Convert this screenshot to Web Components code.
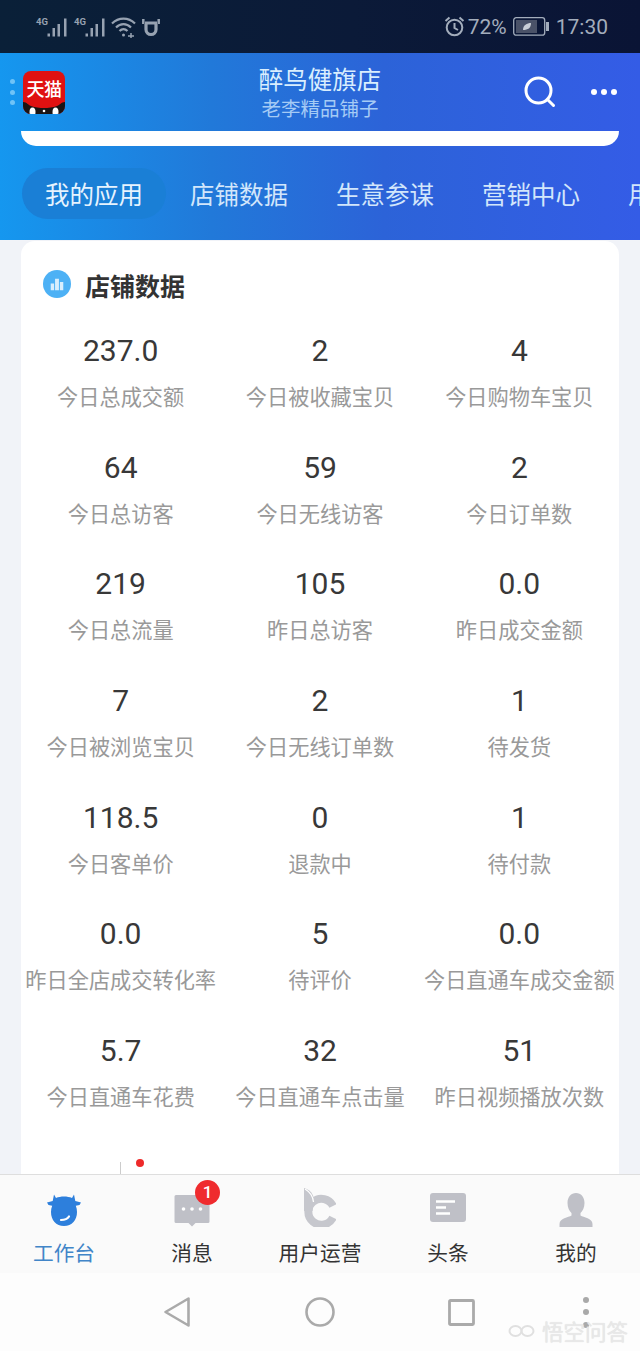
<!DOCTYPE html>
<html lang="zh"><head><meta charset="utf-8"><title>店铺数据</title>
<style>
html,body{margin:0;padding:0;background:#f1f3f8}
body{width:640px;height:1351px;overflow:hidden;display:flex;flex-direction:column;font-family:Roboto,"Noto Sans CJK SC",sans-serif}
</style></head><body>
<status-bar></status-bar>
<shop-header></shop-header>
<main-area>
<stat-card title-text="店铺数据">
<stat-item n="237.0" l="今日总成交额"></stat-item><stat-item n="2" l="今日被收藏宝贝"></stat-item><stat-item n="4" l="今日购物车宝贝"></stat-item>
<stat-item n="64" l="今日总访客"></stat-item><stat-item n="59" l="今日无线访客"></stat-item><stat-item n="2" l="今日订单数"></stat-item>
<stat-item n="219" l="今日总流量"></stat-item><stat-item n="105" l="昨日总访客"></stat-item><stat-item n="0.0" l="昨日成交金额"></stat-item>
<stat-item n="7" l="今日被浏览宝贝"></stat-item><stat-item n="2" l="今日无线订单数"></stat-item><stat-item n="1" l="待发货"></stat-item>
<stat-item n="118.5" l="今日客单价"></stat-item><stat-item n="0" l="退款中"></stat-item><stat-item n="1" l="待付款"></stat-item>
<stat-item n="0.0" l="昨日全店成交转化率"></stat-item><stat-item n="5" l="待评价"></stat-item><stat-item n="0.0" l="今日直通车成交金额"></stat-item>
<stat-item n="5.7" l="今日直通车花费"></stat-item><stat-item n="32" l="今日直通车点击量"></stat-item><stat-item n="51" l="昨日视频播放次数"></stat-item>
</stat-card>
</main-area>
<bottom-tabs>
<tab-item label="工作台" active><svg viewBox="0 0 36 34" width="36" height="34"><path fill="#2d7fdc" d="M8 1.500l2 3.500C12.300 4 15 3.500 18 3.500S23.700 4 26 5l2-3.500 1.300 6.500L35 9.500 33.500 12l-3.700.8c.8 1.900 1.200 3.900 1.200 6.200 0 8-5 14-13 14S5 27 5 19c0-2.300.4-4.300 1.200-6.200L2.500 12 1 9.500 6.700 8z"/><path fill="none" stroke="#fff" stroke-width="2.200" stroke-linecap="round" d="M15 27c3.500 0 6.500-1 8-3.500"/></svg></tab-item>
<tab-item label="消息"><svg viewBox="0 0 36 34" width="36" height="34"><path fill="#bfc0c7" d="M2 2h32a1.500 1.500 0 0 1 1.500 1.500v25A1.500 1.500 0 0 1 34 30H21.500L18 33.500 14.500 30H2a1.500 1.500 0 0 1-1.500-1.500v-25A1.500 1.500 0 0 1 2 2z"/><circle cx="9.500" cy="16" r="1.800" fill="#fff"/><circle cx="18" cy="16" r="1.800" fill="#fff"/><circle cx="26.500" cy="16" r="1.800" fill="#fff"/></svg><span class="badge" slot="badge">1</span></tab-item>
<tab-item label="用户运营"><svg viewBox="0 0 32 39" width="32" height="39"><path fill="none" stroke="#c6c7cd" stroke-width="8" d="M29 18a13 13 0 1 0 0 11.500"/><path fill="#c6c7cd" d="M0 0c6 1.500 9.500 6 10 12l-1.500 11H0z"/><path fill="none" stroke="#fff" stroke-width="1.300" d="M1 1c5 3 8 7 8.500 13"/></svg></tab-item>
<tab-item label="头条"><svg viewBox="0 0 36 29" width="36" height="29" style="margin-bottom:5px"><rect width="36" height="29" rx="3" fill="#bfc0c7"/><path stroke="#fff" stroke-width="2.600" d="M6 8.500h19M6 14.500h10M6 20.500h14"/></svg></tab-item>
<tab-item label="我的"><svg viewBox="0 0 34 34" width="34" height="34"><path fill="#bfc0c7" d="M17 0c5 0 8.500 4 8.500 10 0 4.500-1.800 8-4 10v2.500c3 1.800 12 2.500 12 8.500v3H.5v-3c0-6 9-6.700 12-8.500V20c-2.200-2-4-5.500-4-10C8.500 4 12 0 17 0z"/></svg></tab-item>
</bottom-tabs>
<nav-bar></nav-bar>
<script>
function def(name,css,html){
  customElements.define(name,class extends HTMLElement{
    connectedCallback(){
      if(this.shadowRoot)return;
      const r=this.attachShadow({mode:'open'});
      r.innerHTML='<style>'+css+'</style>'+(typeof html==='function'?html(this):html);
    }
  });
}
def('status-bar',`
:host{display:flex;flex:none;height:53px;align-items:center;background:linear-gradient(90deg,#0a2038,#0b1a38 55%,#0a1435);color:#a3adbc;font-size:21px;padding:0 32px 0 35px;box-sizing:border-box}
.l{display:flex;align-items:center}.sp{flex:1}.r{display:flex;align-items:center}
svg{display:block}`,`
<div class="l">
<svg width="38" height="24" viewBox="0 0 38 24"><text x="1" y="10" font-size="9.500" font-weight="700" fill="#97a2b1" font-family="Roboto">4G</text><path fill="#97a2b1" d="M12.500 18.500h2.500v3h-2.500zM17.500 13h2.500v8.500h-2.500zM22.500 9h2.500v12.500h-2.500zM29 3.500h2.500v18H29z"/></svg>
<svg width="38" height="24" viewBox="0 0 38 24"><text x="1" y="10" font-size="9.500" font-weight="700" fill="#97a2b1" font-family="Roboto">4G</text><path fill="#97a2b1" d="M12.500 18.500h2.500v3h-2.500zM17.500 13h2.500v8.500h-2.500zM22.500 9h2.500v12.500h-2.500zM29 3.500h2.500v18H29z"/></svg>
<svg width="25" height="24" viewBox="0 0 25 24" fill="none" stroke="#97a2b1" stroke-width="2.200"><path d="M1 8.500C7.500 2 17.500 2 24 8.500M5 12.500c4.500-4.500 10.500-4.500 15 0M8.500 16c2.500-2.500 5.500-2.500 8 0"/><circle cx="12.500" cy="20" r="1.500" fill="#97a2b1" stroke="none"/><path d="M17 21h6M20 18v5" stroke-width="1.500"/></svg>
<svg width="18" height="20" viewBox="0 0 18 20" fill="none" stroke="#97a2b1" stroke-width="3.200" style="margin-left:6px"><path d="M4 7v5.500a5 5 0 0 0 10 0V7M3 6h12"/><path d="M1.300 2v5M16.700 2v5" stroke-width="2.500"/></svg>
</div><div class="sp"></div>
<div class="r">
<svg width="21" height="21" viewBox="0 0 21 21" fill="none" stroke="#a3adbc" stroke-width="2" style="margin-right:3px"><circle cx="10.500" cy="11.500" r="7.800"/><path d="M10.500 7v5l3.500 2M1.500 5l4-3.500M19.500 5l-4-3.500"/></svg>
<span>72%</span>
<svg width="37" height="20" viewBox="0 0 37 20" style="margin:0 6px"><rect x=".7" y=".7" width="31" height="17.500" rx="2.500" fill="none" stroke="#a3adbc" stroke-width="1.300"/><rect x="3" y="3" width="21" height="13" fill="#4a5268"/><path d="M10 13c0-5 4-7 8-7 0 5-3 7-8 7z" fill="#c9ced6"/><rect x="33" y="5" width="3" height="9" fill="#a3adbc"/></svg>
<span>17:30</span></div>`);
def('shop-header',`
:host{display:block;flex:none;height:187px;background:linear-gradient(90deg,#1597ef 0%,#2179d9 33%,#2c63d8 60%,#345ce6 100%);overflow:hidden}
.top{display:grid;grid-template-columns:1fr auto 1fr;height:78px;align-items:center;box-sizing:border-box;padding:0 10px}
.left{display:flex;align-items:center}
.dots{display:flex;flex-direction:column;gap:5.500px;width:13px}.dots i{width:5px;height:5px;border-radius:50%;background:#6fc3f7}
.logo{width:42px;height:43px;border-radius:8px;background:#e01111;position:relative;overflow:hidden;font:500 18px/43px "Noto Sans CJK SC",sans-serif;color:#fff;text-align:center;flex:none}
.logo span{display:block;margin-top:-4px;letter-spacing:-.5px}
.logo svg{position:absolute;left:0;bottom:0}
.ti{text-align:center;align-self:start;padding-top:12px}
.t{font-size:24.500px;line-height:32px;color:#d9eefe}.s{font-size:19.500px;line-height:26px;color:#a5cbf5}
.acts{display:flex;align-items:center;justify-content:flex-end;gap:34px;margin-right:12px}
.band{height:15px;margin:0 21px;background:#fff;border-radius:0 0 16px 16px}
.tabs{display:flex;align-items:flex-start;margin:22px 0 0 22px;white-space:nowrap;font-size:24.500px;color:#d2e6fb;height:51px;width:640px}
.tab{margin-right:48px;padding-top:4px;line-height:47px;flex:none}
.tab.on{background:#1a7fd6;color:#e6f3fe;border-radius:26px;padding:4px 23px 0;margin-right:24px}
`,`
<div class="top"><div class="left"><div class="dots"><i></i><i></i><i></i></div>
<div class="logo"><span>天猫</span><svg width="42" height="14" viewBox="0 0 42 14"><path fill="#1a1414" d="M0 14V2c4 0 5 3 8 4 4 1.500 9 2 13 2s9-.5 13-2c3-1 4-4 8-4v12z"/><ellipse cx="9.500" cy="12" rx="3" ry="4.500" fill="#fff"/><ellipse cx="32.500" cy="12" rx="3" ry="4.500" fill="#fff"/><circle cx="21" cy="11" r="1.300" fill="#fff"/></svg></div></div>
<div class="ti"><div class="t">醉鸟健旗店</div><div class="s">老李精品铺子</div></div>
<div class="acts"><svg width="32" height="32" viewBox="0 0 32 32" fill="none" stroke="#fff" stroke-width="3" stroke-linecap="round"><circle cx="14.500" cy="14.500" r="12.500"/><path d="M23.500 23.500l6 6"/></svg>
<svg width="28" height="8" viewBox="0 0 28 8" fill="#fff"><circle cx="4" cy="4" r="3"/><circle cx="14" cy="4" r="3"/><circle cx="24" cy="4" r="3"/></svg></div></div>
<div class="band"></div>
<div class="tabs"><div class="tab on">我的应用</div><div class="tab">店铺数据</div><div class="tab">生意参谋</div><div class="tab">营销中心</div><div class="tab">用户运营</div></div>`);
def('main-area',`:host{display:block;flex:1;min-height:0;overflow:hidden;padding:1px 21px 0;background:#f1f3f8}`,`<slot></slot>`);
def('stat-card',`
:host{display:block;background:#fff;border-radius:14px 14px 0 0;height:1000px}
.h{display:flex;align-items:center;height:30px;padding:29px 0 31px 22px;font-size:25px;font-weight:700;color:#333;gap:14px;font-family:"Noto Sans CJK SC",sans-serif}
.g{display:grid;grid-template-columns:repeat(3,1fr);grid-auto-rows:116.7px}
.stub{display:flex;align-items:flex-start;padding-left:99px;margin-top:14px;height:30px}
.stub i{width:1px;height:14px;background:#ccc}.stub b{width:8px;height:8px;border-radius:50%;background:#ee2a2a;margin:-3px 0 0 15px}
`,t=>`<div class="h"><svg width="28" height="28" viewBox="0 0 29 29" style="margin-top:-2px"><circle cx="14.500" cy="14.500" r="14.500" fill="#4db1f5"/><path fill="#d8eefd" d="M8 14h3.500v7H8zM12.500 9h4v12h-4zM17.500 12.500H21V21h-3.500z"/></svg><span>${t.getAttribute('title-text')}</span></div>
<div class="g"><slot></slot></div><div class="stub"><i></i><b></b></div>`);
def('stat-item',`
:host{display:block;text-align:center;white-space:nowrap}
.n{font-size:30px;line-height:40px;color:#383838;font-family:Roboto,sans-serif}
.l{font-size:21.200px;line-height:30px;margin-top:10px;color:#999;font-family:"Noto Sans CJK SC",sans-serif}
`,t=>`<div class="n">${t.getAttribute('n')}</div><div class="l">${t.getAttribute('l')}</div>`);
def('bottom-tabs',`:host{display:grid;grid-template-columns:repeat(5,128px);flex:none;height:99px;box-sizing:border-box;background:#fafafa;border-top:1px solid #dedede}`,`<slot></slot>`);
def('tab-item',`
:host{display:flex;flex-direction:column;align-items:center;position:relative;font:20.700px/28px "Noto Sans CJK SC",sans-serif;color:#333}
:host([active]){color:#4185c8}
.ic{height:52px;display:flex;align-items:flex-end;justify-content:center}
.lb{margin-top:11px}
::slotted(.badge){position:absolute;left:67px;top:5px;width:25px;height:25px;border-radius:50%;background:#ef2b2e;color:#fff;font:500 17px/25px Roboto,sans-serif;text-align:center}
`,t=>`<div class="ic"><slot></slot></div><slot name="badge"></slot><div class="lb">${t.getAttribute('label')}</div>`);
def('nav-bar',`
:host{display:flex;flex:none;height:78px;background:#fdfdfd;position:relative;align-items:center;justify-content:flex-start;padding:0 0 0 163px;box-sizing:border-box}
svg{display:block}
.wm{position:absolute;left:508px;top:45px;display:flex;align-items:center;gap:7px;font:21.500px/26px "Noto Sans CJK SC",sans-serif;color:#e8e8e8;text-shadow:0 0 1px #ddd}
.more{display:flex;flex-direction:column;gap:6.500px;margin-left:108px}.more i{width:6px;height:6px;border-radius:50%;background:#a9a9a9}
`,`<svg width="28" height="32" viewBox="0 0 28 32" fill="none" stroke="#aaa" stroke-width="2.600" stroke-linejoin="round"><path d="M25.500 2.500v27L2.500 16z"/></svg>
<svg width="30" height="30" viewBox="0 0 30 30" fill="none" stroke="#aaa" stroke-width="2.600" style="margin-left:114px"><circle cx="15" cy="15" r="13.500"/></svg>
<svg width="27" height="27" viewBox="0 0 27 27" fill="none" stroke="#aaa" stroke-width="2.800" style="margin-left:113px"><rect x="1.500" y="1.500" width="24" height="24" rx="1"/></svg>
<div class="more"><i></i><i></i><i></i></div>
<div class="wm"><svg width="27" height="14" viewBox="0 0 27 14" fill="none" stroke="#e0e0e0" stroke-width="2"><ellipse cx="7.500" cy="7" rx="6" ry="5"/><ellipse cx="19.500" cy="7" rx="6" ry="5"/></svg><span>悟空问答</span></div>`);
</script>
</body></html>
